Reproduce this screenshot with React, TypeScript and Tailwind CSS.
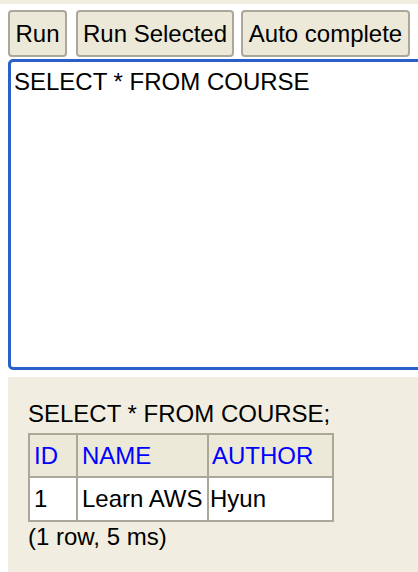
import React from 'react';

const font = { fontFamily: '"Liberation Sans", Arial, sans-serif' };

const ToolButton: React.FC<{ label: string; className?: string }> = ({ label, className }) => (
  <button
    className={`h-[47px] px-0 whitespace-nowrap text-center text-[24px] text-black bg-[#ece9d8] border-2 border-[#aca899] rounded-[4px] leading-none ${className ?? ''}`}
  >
    {label}
  </button>
);

export default function App() {
  const rows = [{ id: '1', name: 'Learn AWS', author: 'Hyun' }];

  return (
    <div className="w-[418px] h-[572px] overflow-hidden bg-white" style={font}>
      <div className="h-[4px] bg-[#f1eee1]" />

      {/* toolbar */}
      <div className="flex pl-[8px] pt-[6px]">
        <ToolButton label="Run" className="w-[59px]" />
        <ToolButton label="Run Selected" className="w-[158px] ml-[9px]" />
        <ToolButton label="Auto complete" className="w-[169px] ml-[7px]" />
      </div>

      {/* sql editor */}
      <div className="ml-[8px] mt-[2px] w-[430px] h-[311px] border-[3px] border-[#2b5fc9] rounded-[5px] bg-white px-[3px] pt-[6px]">
        <div className="text-[24px] leading-[28px] text-black">SELECT * FROM COURSE</div>
      </div>

      {/* result */}
      <div className="ml-[8px] mt-[7px] h-[195px] bg-[#f1eee1] pl-[20px] pt-[23px] text-[24px] leading-[28px] text-black">
        <div>SELECT * FROM COURSE;</div>
        <table className="mt-[5px] border-collapse border-2 border-[#aca899]">
          <thead>
            <tr className="h-[43px] bg-[#ece9d8]">
              <th className="w-[48px] border-2 border-[#aca899] pl-[4px] text-left font-normal text-[#0000ff]">ID</th>
              <th className="w-[131px] border-2 border-[#aca899] pl-[4px] text-left font-normal text-[#0000ff]">NAME</th>
              <th className="w-[125px] border-2 border-[#aca899] pl-[3px] text-left font-normal text-[#0000ff]">AUTHOR</th>
            </tr>
          </thead>
          <tbody>
            {rows.map(r => (
              <tr key={r.id} className="h-[44px] bg-white">
                <td className="border-2 border-[#aca899] pl-[4px]">{r.id}</td>
                <td className="border-2 border-[#aca899] pl-[4px]">{r.name}</td>
                <td className="border-2 border-[#aca899] pl-[1px]">{r.author}</td>
              </tr>
            ))}
          </tbody>
        </table>
        <div className="mt-[1px]">(1 row, 5 ms)</div>
      </div>
    </div>
  );
}
